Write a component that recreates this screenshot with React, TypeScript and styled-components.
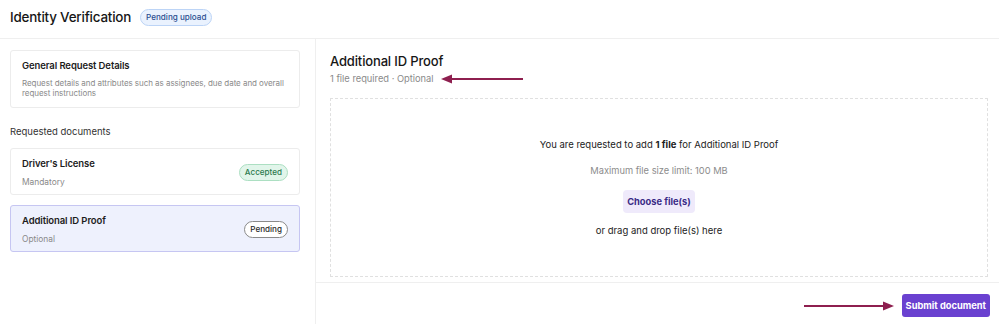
import React from "react";
import styled, { createGlobalStyle } from "styled-components";

const GlobalStyle = createGlobalStyle`
  html, body {
    margin: 0;
    padding: 0;
    background: #fff;
  }
  body {
    font-family: Inter, "Noto Sans", sans-serif;
    color: #1f1f1f;
  }
  * {
    box-sizing: border-box;
  }
`;

const ARROW = "#8e1f4f";

const Arrow: React.FC<{ width: number; dir: "left" | "right" }> = ({ width, dir }) => {
  const h = 10;
  const mid = h / 2;
  const head = 11;
  return (
    <svg width={width} height={h} viewBox={`0 0 ${width} ${h}`}>
      {dir === "left" ? (
        <>
          <line x1={head - 1} y1={mid} x2={width} y2={mid} stroke={ARROW} strokeWidth={2} />
          <polygon points={`0,${mid} ${head},${mid - 4.5} ${head},${mid + 4.5}`} fill={ARROW} />
        </>
      ) : (
        <>
          <line x1={0} y1={mid} x2={width - head + 1} y2={mid} stroke={ARROW} strokeWidth={2} />
          <polygon
            points={`${width},${mid} ${width - head},${mid - 4.5} ${width - head},${mid + 4.5}`}
            fill={ARROW}
          />
        </>
      )}
    </svg>
  );
};

const App: React.FC = () => {
  return (
    <>
      <GlobalStyle />
      <Page>
        <Header>
          <Title>Identity Verification</Title>
          <Badge tone="blue">Pending upload</Badge>
        </Header>

        <Main>
          <Sidebar>
            <Card>
              <CardTitle>General Request Details</CardTitle>
              <CardDesc>
                Request details and attributes such as assignees, due date and overall request
                instructions
              </CardDesc>
            </Card>

            <SectionLabel>Requested documents</SectionLabel>

            <DocList>
              <DocCard>
                <DocText>
                  <CardTitle>Driver's License</CardTitle>
                  <DocSub>Mandatory</DocSub>
                </DocText>
                <Badge tone="green">Accepted</Badge>
              </DocCard>
              <DocCard active>
                <DocText>
                  <CardTitle>Additional ID Proof</CardTitle>
                  <DocSub>Optional</DocSub>
                </DocText>
                <Badge tone="neutral">Pending</Badge>
              </DocCard>
            </DocList>
          </Sidebar>

          <Content>
            <ContentBody>
              <Heading>Additional ID Proof</Heading>
              <SubRow>
                <SubText>1 file required · Optional</SubText>
                <Arrow width={82} dir="left" />
              </SubRow>

              <DropZone>
                <DropLine>
                  You are requested to add <strong>1 file</strong> for Additional ID Proof
                </DropLine>
                <LimitLine>Maximum file size limit: 100 MB</LimitLine>
                <ChooseButton>Choose file(s)</ChooseButton>
                <DropLine>or drag and drop file(s) here</DropLine>
              </DropZone>
            </ContentBody>

            <Footer>
              <Arrow width={90} dir="right" />
              <SubmitButton>Submit document</SubmitButton>
            </Footer>
          </Content>
        </Main>
      </Page>
    </>
  );
};

const Page = styled.div`
  display: flex;
  flex-direction: column;
  width: 999px;
  height: 324px;
  overflow: hidden;
`;

const Header = styled.header`
  display: flex;
  align-items: center;
  gap: 9px;
  height: 39px;
  padding: 0 10px 4px;
  border-bottom: 1px solid #efefef;
`;

const Title = styled.h1`
  margin: 0;
  font-size: 13.4px;
  font-weight: 500;
  letter-spacing: -0.2px;
  color: #161616;
`;

const badgeTones = {
  blue: { bg: "#eaf2fe", border: "#bcd4f6", color: "#2b4e91" },
  green: { bg: "#e1f5ea", border: "#acdfc2", color: "#2c7a4e" },
  neutral: { bg: "#ffffff", border: "#8a8a8a", color: "#2a2a2a" },
};

const Badge = styled.span<{ tone: keyof typeof badgeTones }>`
  display: inline-flex;
  align-items: center;
  height: 17px;
  padding: 0 5px;
  border-radius: 9px;
  font-size: 8.1px;
  font-weight: 500;
  white-space: nowrap;
  background: ${({ tone }) => badgeTones[tone].bg};
  border: 1px solid ${({ tone }) => badgeTones[tone].border};
  color: ${({ tone }) => badgeTones[tone].color};
`;

const Main = styled.div`
  display: flex;
  flex: 1;
  min-height: 0;
`;

const Sidebar = styled.aside`
  width: 316px;
  flex-shrink: 0;
  padding: 11px 15px 0 10px;
  border-right: 1px solid #efefef;
`;

const Card = styled.div`
  padding: 8px 11px 9px;
  border: 1px solid #ececec;
  border-radius: 3px;
  background: #fff;
`;

const CardTitle = styled.div`
  font-size: 9.5px;
  font-weight: 600;
  line-height: 14px;
  letter-spacing: -0.1px;
  color: #1c1c1c;
`;

const CardDesc = styled.div`
  margin-top: 5px;
  font-size: 8px;
  line-height: 10px;
  letter-spacing: -0.05px;
  color: #8a8a8a;
`;

const SectionLabel = styled.div`
  margin: 18px 0 10px;
  font-size: 9.5px;
  line-height: 12px;
  color: #333;
`;

const DocList = styled.div`
  display: flex;
  flex-direction: column;
  gap: 10px;
`;

const DocCard = styled.div<{ active?: boolean }>`
  display: flex;
  align-items: center;
  justify-content: space-between;
  height: 47px;
  padding: 1px 11px 0;
  border-radius: 3px;
  border: 1px solid ${({ active }) => (active ? "#c6c6f2" : "#ececec")};
  background: ${({ active }) => (active ? "#eef1fd" : "#fff")};
`;

const DocText = styled.div`
  display: flex;
  flex-direction: column;
  gap: 6px;
`;

const DocSub = styled.div`
  font-size: 8.4px;
  line-height: 11px;
  color: #8a8a8a;
`;

const Content = styled.main`
  display: flex;
  flex-direction: column;
  flex: 1;
  min-width: 0;
`;

const ContentBody = styled.div`
  display: flex;
  flex-direction: column;
  flex: 1;
  padding: 12px 11px 5px 14px;
  border-bottom: 1px solid #efefef;
`;

const Heading = styled.h2`
  margin: 0;
  font-size: 13px;
  font-weight: 500;
  line-height: 20px;
  letter-spacing: -0.15px;
  color: #161616;
`;

const SubRow = styled.div`
  display: flex;
  align-items: center;
  gap: 7px;
  margin-top: 1px;
`;

const SubText = styled.span`
  font-size: 9.3px;
  line-height: 14px;
  color: #8a8a8a;
`;

const DropZone = styled.div`
  display: flex;
  flex-direction: column;
  align-items: center;
  justify-content: center;
  flex: 1;
  margin-top: 12px;
  border: 1px dashed #e0e0e0;
  text-align: center;
`;

const DropLine = styled.div`
  font-size: 9.5px;
  line-height: 12px;
  color: #222;

  strong {
    font-weight: 700;
  }
`;

const LimitLine = styled.div`
  margin: 14px 0 13px;
  font-size: 9.3px;
  line-height: 12px;
  color: #8c8c8c;
`;

const ChooseButton = styled.button`
  height: 23px;
  padding: 0 4px;
  margin-bottom: 12px;
  border: none;
  border-radius: 4px;
  background: #efeafb;
  color: #3a2a86;
  font-family: inherit;
  font-size: 9.3px;
  font-weight: 700;
  cursor: pointer;
`;

const Footer = styled.footer`
  display: flex;
  align-items: center;
  justify-content: flex-end;
  gap: 8px;
  height: 41px;
  padding: 4px 9px 0 0;
`;

const SubmitButton = styled.button`
  height: 23px;
  padding: 0 4px;
  border: none;
  border-radius: 3px;
  background: #6a41d0;
  color: #fff;
  font-family: inherit;
  font-size: 9.3px;
  font-weight: 700;
  cursor: pointer;
`;

export default App;
